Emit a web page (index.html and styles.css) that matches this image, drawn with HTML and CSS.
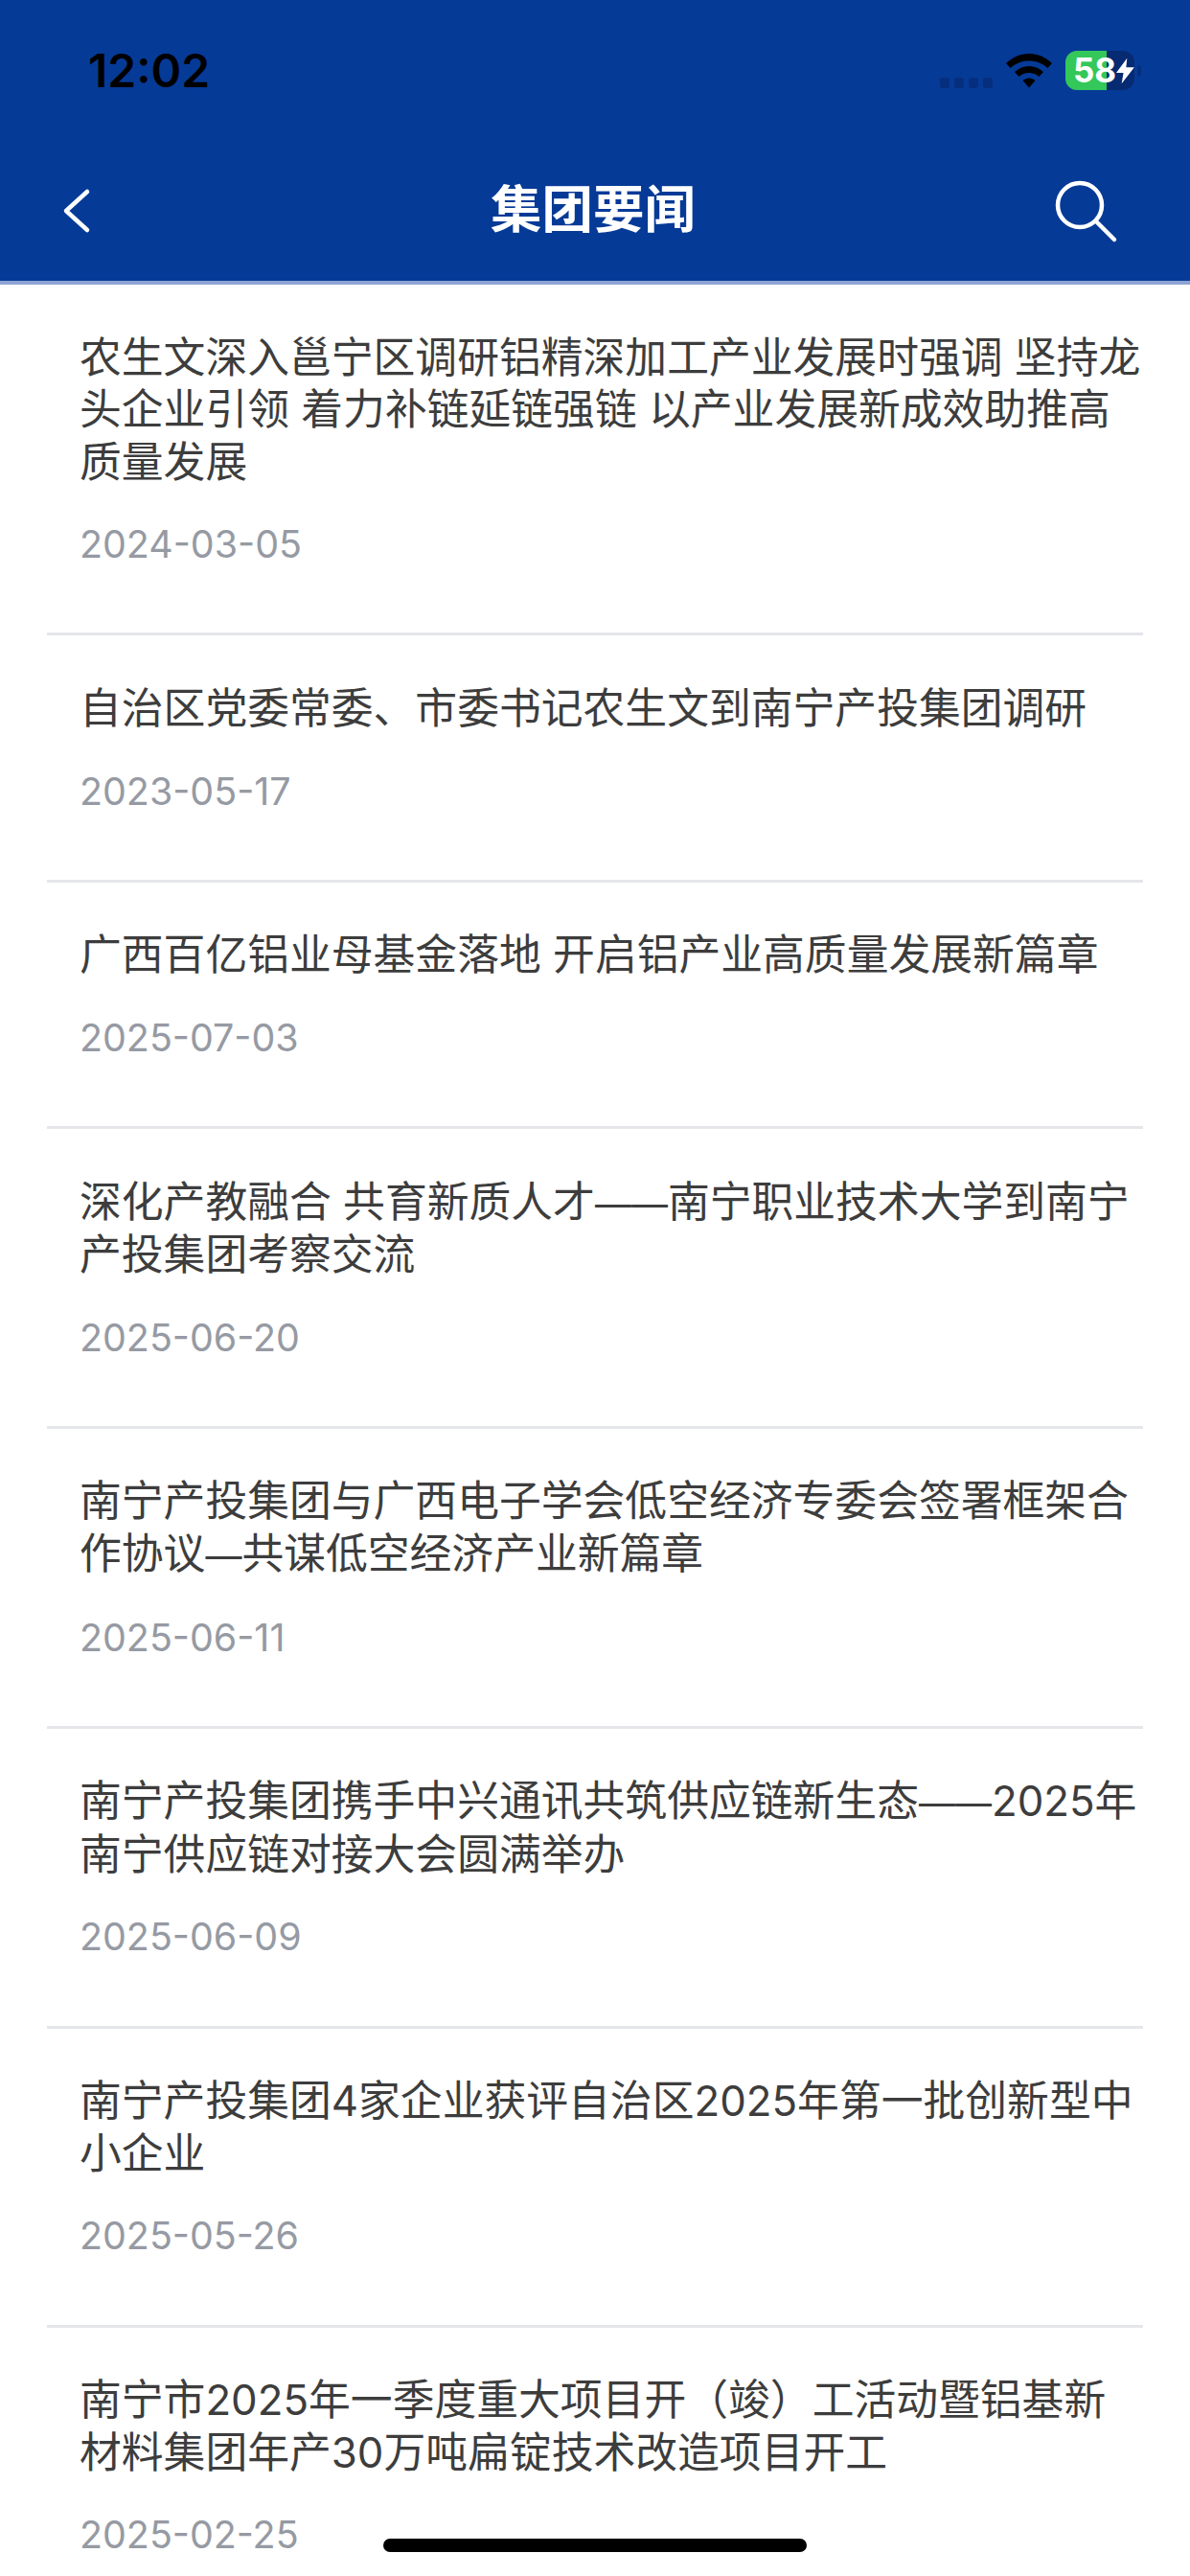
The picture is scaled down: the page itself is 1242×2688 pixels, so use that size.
FILE: index.html
```html
<!DOCTYPE html>
<html>
<head>
  <meta charset="UTF-8">
  <title>集团要闻</title>
  <link rel="stylesheet" href="styles.css">
</head>
<body>
  <header class="top">
    <div class="status">
      <span class="time">12:02</span>
      <div class="status-right">
        <div class="signal"><i></i><i></i><i></i><i></i></div>
        <svg class="wifi" width="48" height="36" viewBox="0 0 48 36">
          <path d="M24 0C15 0 7 3.500 0 10L4.500 15C10 10 16.500 7.500 24 7.500S38 10 43.500 15L48 10C41 3.500 33 0 24 0Z"/>
          <path d="M24 13C18.500 13 13.500 15 9 19L13.500 24C16.500 21.500 20 20 24 20S31.500 21.500 34.500 24L39 19C34.500 15 29.500 13 24 13Z"/>
          <path d="M24 25.500C21.500 25.500 19.500 26.500 17.500 28L24 35.500L30.500 28C28.500 26.500 26.500 25.500 24 25.500Z"/>
        </svg>
        <div class="battery">
          <div class="battery-body">
            <span class="battery-num">58</span>
            <svg class="bolt" width="20" height="28" viewBox="0 0 20 28"><path d="M12 0L0 16H8L6 28L20 10H11Z"/></svg>
          </div>
          <div class="battery-tip"></div>
        </div>
      </div>
    </div>
    <nav class="nav">
      <svg class="nav-icon" width="40" height="60" viewBox="0 0 40 60">
        <path d="M27 11L5 31L27 51"/>
      </svg>
      <h1>集团要闻</h1>
      <svg class="nav-icon" width="70" height="70" viewBox="0 0 70 70">
        <circle cx="26" cy="30" r="23"/>
        <path d="M43 47L62 66"/>
      </svg>
    </nav>
  </header>

  <ul class="news">
    <li><h3>农生文深入邕宁区调研铝精深加工产业发展时强调 坚持龙头企业引领 着力补链延链强链 以产业发展新成效助推高质量发展</h3><p>2024-03-05</p></li>
    <li><h3>自治区党委常委、市委书记农生文到南宁产投集团调研</h3><p>2023-05-17</p></li>
    <li><h3>广西百亿铝业母基金落地 开启铝产业高质量发展新篇章</h3><p>2025-07-03</p></li>
    <li><h3>深化产教融合 共育新质人才<span class="dash">——</span>南宁职业技术大学到南宁产投集团考察交流</h3><p>2025-06-20</p></li>
    <li><h3>南宁产投集团与广西电子学会低空经济专委会签署框架合作协议<span class="dash">—</span>共谋低空经济产业新篇章</h3><p>2025-06-11</p></li>
    <li><h3>南宁产投集团携手中兴通讯共筑供应链新生态<span class="dash">——</span>2025年南宁供应链对接大会圆满举办</h3><p>2025-06-09</p></li>
    <li><h3>南宁产投集团4家企业获评自治区2025年第一批创新型中小企业</h3><p>2025-05-26</p></li>
    <li><h3>南宁市2025年一季度重大项目开（竣）工活动暨铝基新材料集团年产30万吨扁锭技术改造项目开工</h3><p>2025-02-25</p></li>
  </ul>

  <div class="home-bar"></div>
</body>
</html>
```

FILE: styles.css
```css
* { box-sizing: border-box; }
html, body { margin: 0; padding: 0; }
body {
  position: relative;
  width: 1242px;
  height: 2688px;
  overflow: hidden;
  background: #fff;
  font-family: "Inter", "Noto Sans CJK SC", sans-serif;
}

.top { background: #063a97; height: 297px; border-bottom: 4px solid #8ea3d3; }

.status { display: flex; justify-content: space-between; height: 144px; padding: 48px 51px 0 92px; }
.time { font-size: 48px; line-height: 52px; font-weight: 600; color: #000; }
.status-right { display: flex; align-items: flex-start; }
.signal { display: flex; gap: 5px; margin: 33px 14px 0 0; }
.signal i { width: 10px; height: 11px; border-radius: 3px; background: #052f7d; }
.wifi { fill: #000; margin: 8px 14px 0 0; }
.battery { display: flex; align-items: center; margin-top: 5px; }
.battery-body {
  position: relative;
  display: flex;
  align-items: center;
  width: 72px;
  height: 41px;
  border-radius: 12px;
  background: linear-gradient(to right, #34c759 43px, #062b72 43px);
}
.battery-num { margin-left: 8px; font-size: 35px; line-height: 41px; font-weight: 700; color: #fff; }
.bolt { fill: #fff; margin-left: 0; }
.battery-tip { width: 4px; height: 12px; margin-left: 3px; border-radius: 0 6px 6px 0; background: #052f7d; }

.nav { display: flex; align-items: center; justify-content: space-between; height: 149px; padding: 0 71px 0 64px; }
.nav h1 { margin: 0 0 0 33px; font-size: 53.500px; line-height: 70px; font-weight: 700; color: #fff; }
.nav-icon { fill: none; stroke: #fff; stroke-width: 4.500; stroke-linecap: round; stroke-linejoin: round; }

.news { list-style: none; margin: 0; padding: 0 49px; }
.news li { padding: 49.500px 0 66.200px 34px; border-bottom: 3px solid #e5e6ea; }
.news h3 { margin: 0; font-size: 43.800px; line-height: 54.600px; font-weight: 400; color: #3d3d3d; }
.news .dash { font-size: 38px; }
.news p { margin: 32px 0 0; font-size: 39.400px; line-height: 52px; color: #969aa3; }

.home-bar {
  position: absolute;
  left: 400px;
  top: 2649px;
  width: 442px;
  height: 14px;
  border-radius: 7px;
  background: #000;
}
```
